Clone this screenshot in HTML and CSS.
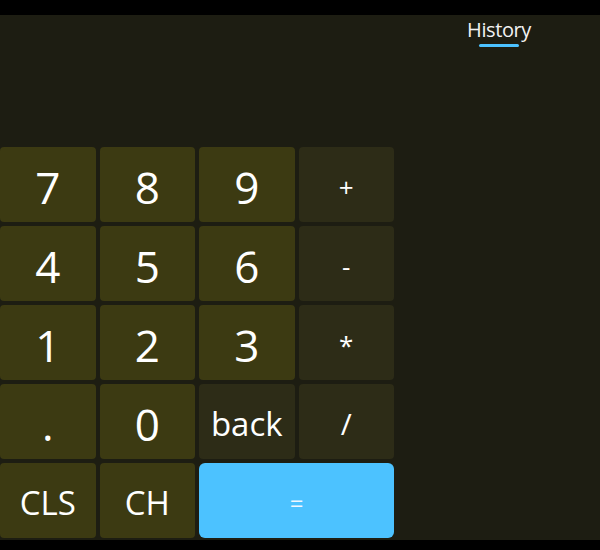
FILE: index.html
```html
<!DOCTYPE html>
<html>
<head>
<meta charset="utf-8">
<link rel="stylesheet" href="styles.css">
</head>
<body>
<div class="screen">
  <div class="topbar"></div>
  <div class="window">
    <div class="header">
      <div class="tab">
        <span class="tab-label">History</span>
        <span class="tab-line"></span>
      </div>
    </div>
    <div class="keypad">
      <button class="key num">7</button>
      <button class="key num">8</button>
      <button class="key num">9</button>
      <button class="key op small">+</button>
      <button class="key num">4</button>
      <button class="key num">5</button>
      <button class="key num">6</button>
      <button class="key op small">-</button>
      <button class="key num">1</button>
      <button class="key num">2</button>
      <button class="key num">3</button>
      <button class="key op small">*</button>
      <button class="key num">.</button>
      <button class="key num">0</button>
      <button class="key op text">back</button>
      <button class="key op slash">/</button>
      <button class="key num text">CLS</button>
      <button class="key num text">CH</button>
      <button class="key equals">=</button>
    </div>
  </div>
  <div class="bottombar"></div>
</div>
</body>
</html>
```

FILE: styles.css
```css
* { box-sizing: border-box; }
html, body {
  margin: 0;
  padding: 0;
  background: #000;
}
.screen {
  width: 600px;
  height: 550px;
  display: flex;
  flex-direction: column;
  font-family: "Open Sans", "Noto Sans", sans-serif;
  color: #fff;
}
.topbar {
  height: 15px;
  background: #000;
}
.bottombar {
  height: 10px;
  background: #000;
}
.window {
  flex: 1;
  background: #1d1d12;
  display: flex;
  flex-direction: column;
}
.header {
  height: 132px;
  display: flex;
  justify-content: flex-end;
  padding-right: 69px;
}
.tab {
  display: flex;
  flex-direction: column;
  align-items: center;
  padding-top: 1px;
}
.tab-label {
  font-size: 20px;
  line-height: 28px;
  letter-spacing: -0.4px;
  color: #f2f2f2;
}
.tab-line {
  width: 40px;
  height: 3px;
  margin-top: 0;
  border-radius: 2px;
  background: #4cc2ff;
}
.keypad {
  width: 394px;
  display: grid;
  grid-template-columns: repeat(4, 1fr);
  grid-template-rows: repeat(5, 75px);
  gap: 4px;
}
.key {
  border: none;
  margin: 0;
  padding: 0;
  border-radius: 4px;
  font-family: "Open Sans", "Noto Sans", sans-serif;
  color: #fff;
  font-size: 44px;
  line-height: 1;
  display: flex;
  align-items: center;
  justify-content: center;
  padding-top: 4px;
}
.num { background: #3c3a12; }
.op { background: #2d2c17; }
.small { font-size: 26px; }
.slash { font-size: 30px; }
.text { font-size: 33px; }
.equals {
  grid-column: span 2;
  background: #4cc2ff;
  border-radius: 6px;
  font-size: 24px;
  color: #f0f8ff;
}
```
